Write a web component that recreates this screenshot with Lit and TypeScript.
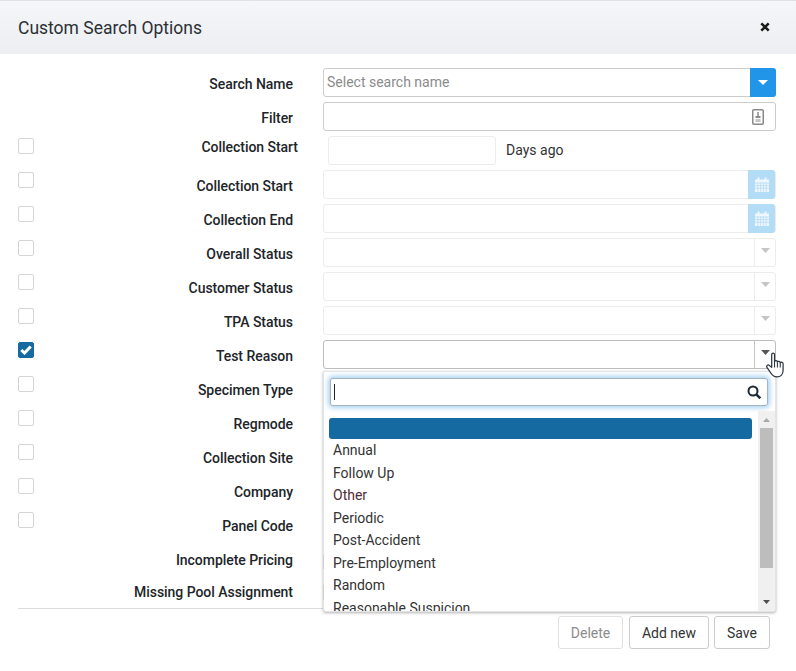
import { LitElement, html, css } from "lit";
import { customElement } from "lit/decorators.js";

const caret = (w = 9, h = 5) => html`<svg class="caret" width="${w}" height="${h}" viewBox="0 0 10 5" preserveAspectRatio="none"><path d="M0 0h10L5 5z" fill="currentColor"/></svg>`;

const calendar = html`<svg width="14" height="15" viewBox="0 0 14 15"><path fill="#fff" fill-opacity=".8" d="M0 2.500h2.500V.500h2v2h5v-2h2v2H14V15H0z"/><path stroke="#b3dcf6" stroke-width=".8" d="M0 6h14M0 8.600h14M0 11.200h14M2.800 5.500V15M5.600 5.500V15M8.400 5.500V15M11.200 5.500V15"/></svg>`;

interface Row { label: string; check?: boolean; checked?: boolean; kind: string; }
const rows: Row[] = [
  { label: "Search Name", kind: "search" },
  { label: "Filter", kind: "filter" },
  { label: "Collection Start", check: true, kind: "days" },
  { label: "Collection Start", check: true, kind: "date" },
  { label: "Collection End", check: true, kind: "date" },
  { label: "Overall Status", check: true, kind: "off" },
  { label: "Customer Status", check: true, kind: "off" },
  { label: "TPA Status", check: true, kind: "off" },
  { label: "Test Reason", check: true, checked: true, kind: "open" },
  { label: "Specimen Type", check: true, kind: "none" },
  { label: "Regmode", check: true, kind: "none" },
  { label: "Collection Site", check: true, kind: "none" },
  { label: "Company", check: true, kind: "none" },
  { label: "Panel Code", check: true, kind: "none" },
  { label: "Incomplete Pricing", kind: "none" },
  { label: "Missing Pool Assignment", kind: "none" },
];
const items = ["Annual", "Follow Up", "Other", "Periodic", "Post-Accident", "Pre-Employment", "Random", "Reasonable Suspicion"];

@customElement("app-root")
export class AppRoot extends LitElement {
  static styles = css`
    :host { display: block; position: relative; width: 796px; height: 671px; background: #fff; overflow: hidden; font-family: Roboto, sans-serif; font-size: 14px; color: #333; }
    .head { height: 54px; box-sizing: border-box; border-top: 1px solid #dfe1e4; background: linear-gradient(#f5f6f8, #eceef1); display: flex; align-items: center; justify-content: space-between; padding: 0 26px 0 18px; }
    .title { font-size: 17.500px; color: #2b3036; }
    .x { display: block; margin-top: -2px; }
    .form { padding: 14px 20px 0 18px; }
    .row { display: grid; grid-template-columns: 16px 259px 1fr; height: 34px; }
    .row:last-child { height: 32px; margin-top: -2px; }
    .cb { width: 16px; height: 16px; box-sizing: border-box; border: 1px solid #d5d5d5; border-radius: 2px; margin-top: 2px; background: #fff; }
    .cb.on { background: #166aa2; border-color: #166aa2; display: flex; align-items: center; justify-content: center; }
    .lab { text-align: right; font-weight: 500; color: #212529; line-height: 16px; padding-top: 8px; letter-spacing: -.04px; }
    .row.d .lab { padding: 3px 0 0 0; margin-right: -5px; }
    .field { margin-left: 30px; height: 29px; box-sizing: border-box; border: 1px solid #ccc; border-radius: 3px; background: #fff; display: flex; align-items: stretch; justify-content: flex-end; }
    .field.dim { border-color: #ececec; }
    .field.days { margin-left: 35px; width: 168px; border-color: #ececec; flex: none; }
    .dayswrap { display: flex; align-items: flex-start; }
    .dayslab { margin: 6px 0 0 10px; line-height: 16px; color: #333; }
    .ph { flex: 1; color: #8b8b8b; padding-left: 3px; line-height: 26px; }
    .blue { width: 26px; margin: -1px; background: #2196e8; border-radius: 0 3px 3px 0; display: flex; align-items: center; justify-content: center; color: #fff; }
    .cal { width: 27px; margin: -1px 0; background: #b3dcf6; border-radius: 0 3px 3px 0; display: flex; align-items: center; justify-content: center; }
    .arrow { width: 20px; border-left: 1px solid #ececec; display: flex; align-items: center; justify-content: center; color: #c4c4c4; }
    .arrow .caret { margin-top: -4px; }
    .field.open { border-color: #bdbdbd; }
    .field.open .arrow { border-left-color: #c4c4c4; color: #555; }
    .tag { display: flex; align-items: center; padding-right: 11px; }
    .foot { position: absolute; left: 18px; right: 20px; top: 608px; border-top: 1px solid #ddd; display: flex; justify-content: flex-end; padding: 7px 6px 0 0; }
    .btn { height: 33px; box-sizing: border-box; border: 1px solid #ccc; border-radius: 3px; background: #fff; display: flex; align-items: center; justify-content: center; color: #333; }
    .btn.del { width: 65px; border-color: #e0e0e0; color: #8c8c8c; margin-right: 6px; }
    .btn.add { width: 80px; margin-right: 5px; }
    .btn.save { width: 56px; }
    .pop { position: absolute; left: 323px; top: 371px; width: 453px; height: 241px; box-sizing: border-box; background: #fff; border: 1px solid #e4e4e4; border-radius: 0 0 3px 3px; box-shadow: 0 1px 3px rgba(0,0,0,.3); }
    .sb { position: absolute; left: 6px; top: 6px; width: 438px; height: 28px; box-sizing: border-box; border: 1px solid #a3b3c0; border-radius: 3px; background: #fff; box-shadow: 0 0 5px 2px #a9d3f2; display: flex; align-items: center; justify-content: space-between; padding: 0 6px 0 3px; }
    .cur { width: 1px; height: 16px; background: #222; }
    .list { position: absolute; left: 5px; right: 23px; top: 5px; }
    .sel { height: 21px; background: #166aa2; border-radius: 3px; margin-top: 1px; }
    .it { height: 22.500px; line-height: 22.500px; padding-left: 4px; color: #333; white-space: nowrap; }
    .it.o { color: #4f2c38; }
    .clip { position: absolute; left: 0; right: 0; top: 40px; bottom: 0; overflow: hidden; }
    .track { position: absolute; right: 0; top: 39px; bottom: 0; width: 17px; background: #f0f0f0; }
    .thumb { position: absolute; left: 2px; right: 2px; top: 17px; height: 140px; background: #bdbdbd; }
    .sa { position: absolute; left: 5px; width: 7px; height: 4px; display: block; }
    .mk { position: absolute; left: -1px; width: 1px; background: #cfcfcf; }
    .mk.a { top: 183px; height: 14px; }
    .mk.b { top: 213px; height: 15px; }
    .hand { position: absolute; left: 766px; top: 352px; }
  `;

  fieldFor(kind: string) {
    switch (kind) {
      case "search": return html`<div class="field"><div class="ph">Select search name</div><div class="blue">${caret(10, 5)}</div></div>`;
      case "filter": return html`<div class="field"><div class="tag"><svg width="12" height="16" viewBox="0 0 12 16"><rect x=".75" y=".75" width="10.500" height="14.500" rx="1" fill="#fff" stroke="#8a8a8a" stroke-width="1.500"/><path d="M6 3v4" stroke="#8a8a8a" stroke-width="1.500"/><path d="M3.500 7h5v2h-5z" fill="#8a8a8a"/><path d="M3.500 10h5v3h-5z" fill="#c4c4c4"/></svg></div></div>`;
      case "days": return html`<div class="dayswrap"><div class="field days"></div><div class="dayslab">Days ago</div></div>`;
      case "date": return html`<div class="field dim"><div class="cal">${calendar}</div></div>`;
      case "off": return html`<div class="field dim"><div class="arrow">${caret()}</div></div>`;
      case "open": return html`<div class="field open"><div class="arrow">${caret()}</div></div>`;
      default: return html`<div></div>`;
    }
  }

  render() {
    return html`
      <div class="head">
        <div class="title">Custom Search Options</div>
        <svg class="x" width="10" height="10" viewBox="0 0 10 10"><path d="M1.300 1.300l7.400 7.400M8.700 1.300l-7.400 7.400" stroke="#1b1b1b" stroke-width="2.600"/></svg>
      </div>
      <div class="form">
        ${rows.map(r => html`
          <div class="row ${r.kind === "days" ? "d" : ""}">
            ${r.check
              ? html`<div class="cb ${r.checked ? "on" : ""}">${r.checked ? html`<svg width="12" height="10" viewBox="0 0 12 10"><path d="M1.300 5l3.200 3L10.700 1.500" fill="none" stroke="#fff" stroke-width="3"/></svg>` : ""}</div>`
              : html`<div></div>`}
            <div class="lab">${r.label}</div>
            ${this.fieldFor(r.kind)}
          </div>`)}
      </div>
      <div class="foot">
        <div class="btn del">Delete</div>
        <div class="btn add">Add new</div>
        <div class="btn save">Save</div>
      </div>
      <div class="pop">
        <div class="mk a"></div>
        <div class="mk b"></div>
        <div class="sb">
          <div class="cur"></div>
          <svg width="14" height="14" viewBox="0 0 14 14"><circle cx="6" cy="6" r="4.500" fill="none" stroke="#1d2a35" stroke-width="2"/><path d="M9.300 9.300l4 4" stroke="#1d2a35" stroke-width="2.400"/></svg>
        </div>
        <div class="clip">
          <div class="list">
            <div class="sel"></div>
            ${items.map(i => html`<div class="it ${i === "Other" ? "o" : ""}">${i}</div>`)}
          </div>
        </div>
        <div class="track">
          <svg class="sa" style="top:7px" viewBox="0 0 8 4" preserveAspectRatio="none"><path d="M0 4h8L4 0z" fill="#a8a8a8"/></svg>
          <div class="thumb"></div>
          <svg class="sa" style="bottom:7px" viewBox="0 0 8 4" preserveAspectRatio="none"><path d="M0 0h8L4 4z" fill="#505050"/></svg>
        </div>
      </div>
      <svg class="hand" width="19" height="26" viewBox="0 0 20 27">
        <path d="M6 2.500c0-2 3-2 3 0V10c.5-1.500 3-1.500 3 .5.5-1.500 3-1 3 .8.7-1.200 3-.8 3 1V19c0 4-2.500 7-6.500 7-3 0-4.500-1-6-3.500L1 16c-1-1.500 1-3.500 2.500-2L6 16z" fill="#fff" stroke="#2c3440" stroke-width="1.300" stroke-linejoin="round"/>
        <path d="M9 10v6M12 10.500V16M15 11.500V16" stroke="#2c3440" stroke-width="1.100" fill="none"/>
      </svg>
    `;
  }
}
